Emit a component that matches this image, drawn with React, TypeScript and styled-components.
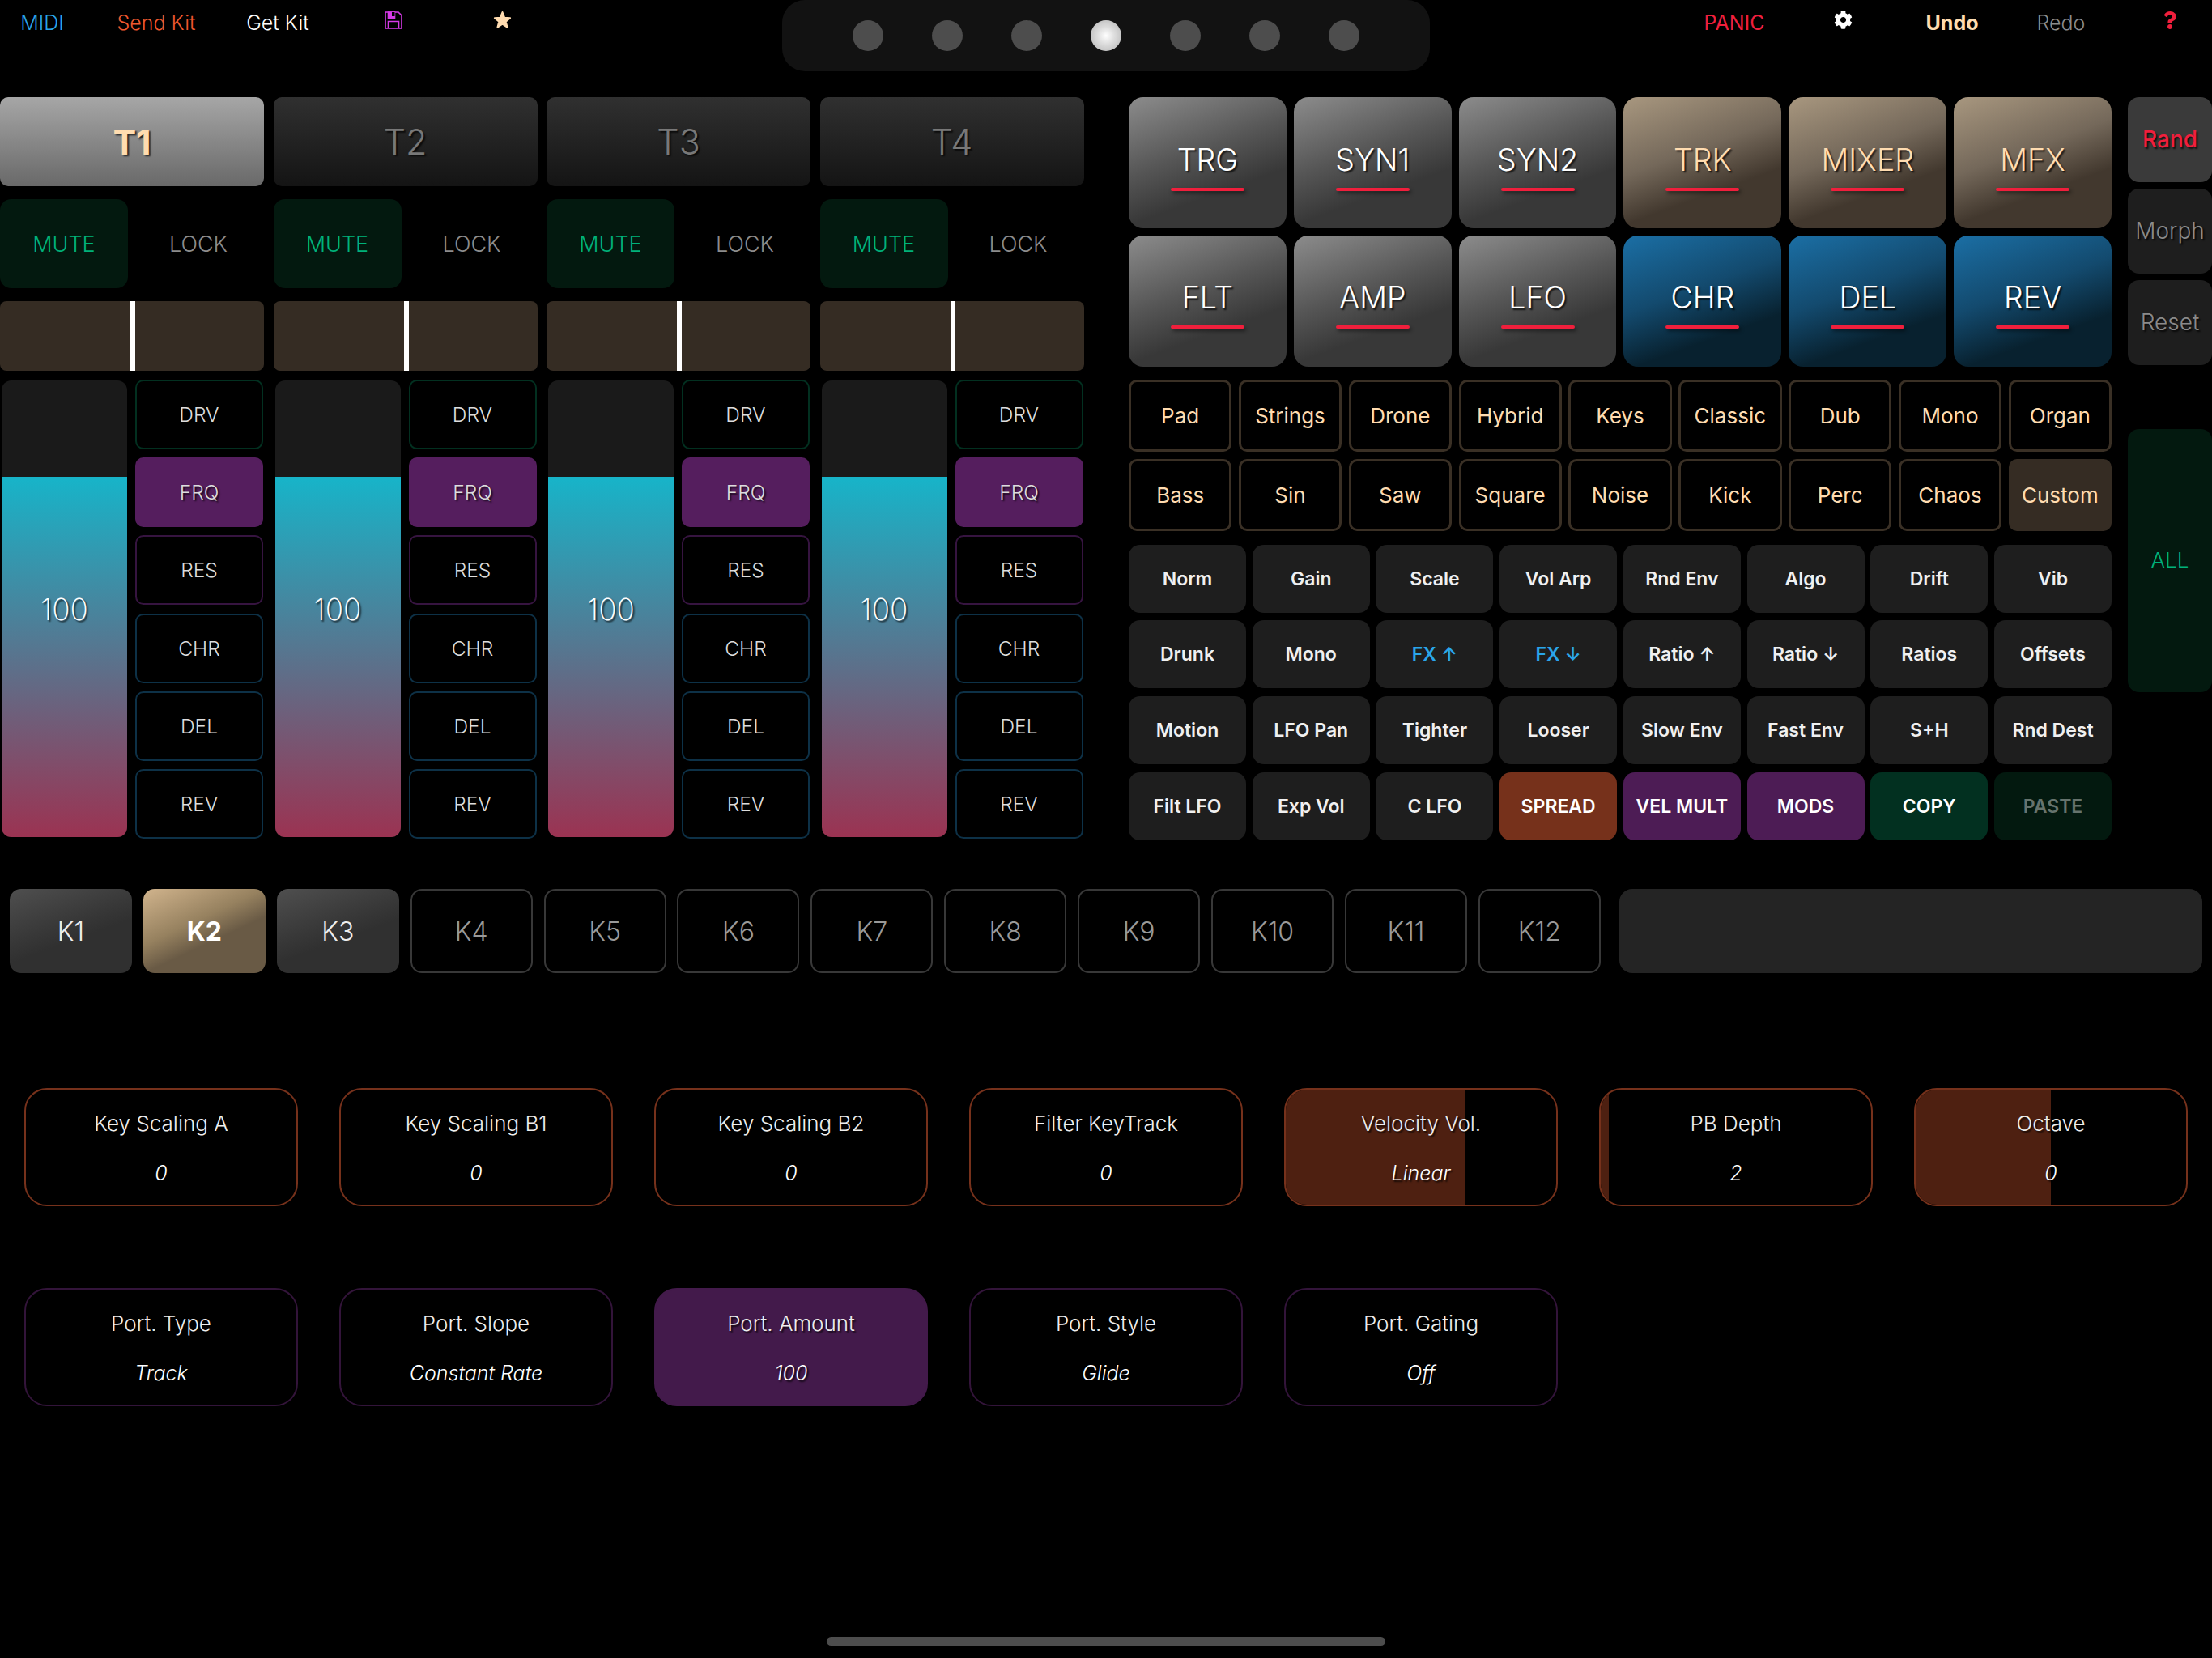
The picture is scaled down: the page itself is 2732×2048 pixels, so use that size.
import * as React from 'react';
import styled, { createGlobalStyle, css } from 'styled-components';
import { FaCog, FaQuestion } from 'react-icons/fa';

const Colors = {
  cream: '#ffdcb0',
  red: '#f01f3c',
  blue: '#2aa5ea',
  green: '#00b27a',
  orange: '#76311b',
  purple: '#4d1c55',
  tan: '#352c23',
  panel: '#1e1e1e',
};

const Global = createGlobalStyle`
  html, body { margin: 0; padding: 0; background: #000; }
  * { box-sizing: border-box; }
`;

const Page = styled.div`
  position: relative;
  width: 2732px;
  height: 2048px;
  overflow: hidden;
  background: #000;
  color: #fff;
  font-family: Inter, "Liberation Sans", sans-serif;
`;

/* header */

const Header = styled.header`
  display: flex;
  align-items: flex-start;
  height: 120px;
`;

const LeftNav = styled.nav`
  display: grid;
  flex: none;
  grid-template-columns: 104px 178px 122px 164px 104px;
  width: 966px;
`;

const RightNav = styled.nav`
  display: flex;
  flex: none;
  gap: 30.5px;
  margin-left: 324px;
`;

const NavItem = styled.div<{ $color: string; $weight?: number; $icon?: boolean }>`
  display: flex;
  align-items: center;
  justify-content: center;
  width: 104px;
  height: 56px;
  padding-bottom: ${p => (p.$icon ? '7px' : '0')};
  font-size: 25px;
  font-weight: ${p => p.$weight || 300};
  color: ${p => p.$color};
  white-space: nowrap;
`;

const LeftNavItem = styled(NavItem)`
  width: 100%;
`;

const DotPanel = styled.div`
  display: flex;
  flex: none;
  align-items: center;
  justify-content: center;
  gap: 60px;
  width: 800px;
  height: 88px;
  border-radius: 28px;
  background: #121212;
`;

const Dot = styled.span<{ $on?: boolean }>`
  width: 38px;
  height: 38px;
  border-radius: 50%;
  background: ${p => (p.$on ? 'radial-gradient(circle, #fff 0%, #dcdcdc 40%, #b0b0b0 100%)' : '#4d4d4d')};
`;

/* main */

const Main = styled.main`
  display: flex;
  align-items: flex-start;
  height: 916px;
`;

const Tracks = styled.section`
  display: grid;
  grid-template-columns: repeat(4, 326px);
  gap: 11.5px;
  width: 1338px;
`;

const Strip = styled.div`
  display: flex;
  flex-direction: column;
`;

const shadow = css`
  text-shadow: 2px 2px 2px rgba(0, 0, 0, 0.75);
`;

const TrackTab = styled.div<{ $on?: boolean }>`
  display: flex;
  align-items: center;
  justify-content: center;
  height: 110px;
  border-radius: 10px;
  font-size: 43px;
  font-weight: ${p => (p.$on ? 700 : 300)};
  ${shadow};
  color: ${p => (p.$on ? Colors.cream : '#787878')};
  background: ${p => (p.$on ? 'linear-gradient(180deg, #a6a6a6, #696969)' : 'linear-gradient(180deg, #303030, #141414)')};
`;

const MuteRow = styled.div`
  display: grid;
  grid-template-columns: 158px 158px;
  gap: 8px;
  height: 110px;
  margin-top: 16px;
`;

const MuteButton = styled.div<{ $on?: boolean }>`
  display: flex;
  align-items: center;
  justify-content: center;
  border-radius: 14px;
  font-size: 27px;
  font-weight: 300;
  color: ${p => (p.$on ? Colors.green : '#8c8c8c')};
  background: ${p => (p.$on ? '#03190f' : 'transparent')};
`;

const Slider = styled.div`
  position: relative;
  height: 86px;
  margin-top: 16px;
  border-radius: 8px;
  background: ${Colors.tan};
`;

const SliderThumb = styled.span`
  position: absolute;
  top: 0;
  bottom: 0;
  left: 161px;
  width: 6px;
  background: #fff;
`;

const StripBody = styled.div`
  display: grid;
  grid-template-columns: 155px 158px;
  gap: 10px;
  margin: 10.5px 0 0 2px;
`;

const Fader = styled.div`
  position: relative;
  display: flex;
  flex-direction: column;
  height: 564px;
  margin-top: 1.5px;
  border-radius: 12px;
  overflow: hidden;
  background: #1a1a1a;
`;

const FaderFill = styled.div`
  margin-top: auto;
  height: 445px;
  background: linear-gradient(180deg, #17b4c9, #9b3352);
`;

const FaderValue = styled.span`
  position: absolute;
  inset: 0;
  display: flex;
  align-items: center;
  justify-content: center;
  font-size: 37px;
  font-weight: 250;
  ${shadow};
`;

const SendStack = styled.div`
  display: flex;
  flex-direction: column;
  gap: 10.4px;
`;

const SendButton = styled.div<{ $border: string; $on?: boolean }>`
  display: flex;
  align-items: center;
  justify-content: center;
  height: 86px;
  border: 2px solid ${p => p.$border};
  border-radius: 10px;
  font-size: 24.5px;
  font-weight: 300;
  color: #ddd;
  ${shadow};
  background: ${p => (p.$on ? p.$border : 'transparent')};
`;

const Pages = styled.section`
  width: 1214px;
  margin-left: 56px;
`;

const PageGrid = styled.div`
  display: grid;
  grid-template-columns: repeat(6, 1fr);
  grid-auto-rows: 162px;
  gap: 8.5px 9px;
`;

const pageThemes = {
  grey: 'linear-gradient(160deg, #8c8c8c 0%, #565656 42%, #383838 68%, #383838 100%)',
  tan: 'linear-gradient(160deg, #a8977f 0%, #74685a 42%, #42382e 68%, #42382e 100%)',
  blue: 'linear-gradient(160deg, #1b6fa5 0%, #134a6e 42%, #08212f 72%, #08212f 100%)',
};

const PageButton = styled.div<{ $theme: keyof typeof pageThemes }>`
  display: flex;
  flex-direction: column;
  align-items: center;
  padding-top: 54.5px;
  border-radius: 18px;
  font-size: 37.5px;
  font-weight: 300;
  line-height: 46px;
  color: ${p => (p.$theme === 'tan' ? Colors.cream : '#fff')};
  ${shadow};
  background: ${p => pageThemes[p.$theme]};
`;

const PageUnderline = styled.span`
  width: 91px;
  height: 4px;
  margin-top: 11px;
  border-radius: 2px;
  background: ${Colors.red};
  box-shadow: 2px 3px 4px rgba(0, 0, 0, 0.5);
`;

const PresetGrid = styled.div`
  display: grid;
  grid-template-columns: repeat(9, 1fr);
  grid-auto-rows: 89px;
  gap: 9px 8.5px;
  margin-top: 16px;
`;

const Preset = styled.div<{ $on?: boolean }>`
  display: flex;
  align-items: center;
  justify-content: center;
  border: 3px solid ${p => (p.$on ? 'transparent' : '#3a3025')};
  border-radius: 10px;
  font-size: 26px;
  font-weight: 400;
  color: ${Colors.cream};
  background: ${p => (p.$on ? Colors.tan : 'transparent')};
`;

const ActionGrid = styled.div`
  display: grid;
  grid-template-columns: repeat(8, 1fr);
  grid-auto-rows: 84px;
  gap: 9.7px 7.7px;
  margin-top: 17px;
`;

const actionThemes = {
  plain: { bg: Colors.panel, fg: '#f0f0f0' },
  fx: { bg: Colors.panel, fg: Colors.blue },
  orange: { bg: Colors.orange, fg: '#fff' },
  purple: { bg: Colors.purple, fg: '#fff' },
  copy: { bg: '#023020', fg: '#fff' },
  paste: { bg: '#03190f', fg: '#66736d' },
};

const Action = styled.div<{ $theme?: keyof typeof actionThemes }>`
  display: flex;
  align-items: center;
  justify-content: center;
  border-radius: 14px;
  font-size: 23px;
  font-weight: 600;
  white-space: nowrap;
  color: ${p => actionThemes[p.$theme || 'plain'].fg};
  background: ${p => actionThemes[p.$theme || 'plain'].bg};
`;

const Side = styled.aside`
  display: flex;
  flex-direction: column;
  gap: 8px;
  width: 104px;
  margin-left: 20px;
`;

const SideButton = styled.div<{ $on?: boolean }>`
  display: flex;
  align-items: center;
  justify-content: center;
  height: 105px;
  border-radius: 14px;
  padding-bottom: 2px;
  font-size: 28px;
  font-weight: ${p => (p.$on ? 500 : 300)};
  ${shadow};
  color: ${p => (p.$on ? Colors.red : '#8a8a8a')};
  background: ${p => (p.$on ? '#3a3a3a' : Colors.panel)};
`;

const AllButton = styled.div`
  display: flex;
  align-items: center;
  justify-content: center;
  height: 325px;
  margin-top: 71px;
  padding-bottom: 2px;
  border-radius: 14px;
  font-size: 26px;
  font-weight: 300;
  color: ${Colors.green};
  background: #03190f;
`;

/* keys */

const KeyRow = styled.section`
  display: flex;
  gap: 13.9px;
  height: 104px;
  margin: 62px 0 0 12px;
`;

const keyThemes = {
  off: css`
    border: 2.5px solid #383838;
    color: #999;
    font-weight: 300;
  `,
  used: css`
    background: linear-gradient(160deg, #4f4f4f 0%, #383838 42%, #303030 58%, #303030 100%);
    color: #eee;
    font-weight: 300;
  `,
  on: css`
    background: linear-gradient(155deg, #d1b48d 0%, #96815f 40%, #695a45 60%, #695a45 100%);
    color: #fff;
    font-weight: 700;
  `,
};

const KeyButton = styled.div<{ $state: keyof typeof keyThemes }>`
  display: flex;
  align-items: center;
  justify-content: center;
  width: 151px;
  border-radius: 14px;
  font-size: 32px;
  ${p => keyThemes[p.$state]};
`;

const KeyPanel = styled.div`
  width: 720px;
  margin-left: 9px;
  border-radius: 16px;
  background: #242424;
`;

/* parameters */

const Params = styled.section`
  display: grid;
  grid-template-columns: repeat(7, 338px);
  grid-auto-rows: 146px;
  gap: 101px 51px;
  margin: 142px 0 0 30px;
`;

const Param = styled.div<{ $border: string; $on?: boolean }>`
  position: relative;
  display: flex;
  flex-direction: column;
  align-items: center;
  padding-top: 25px;
  border: 2px solid ${p => p.$border};
  border-radius: 28px;
  overflow: hidden;
  background: ${p => (p.$on ? '#431a4b' : 'transparent')};
`;

const ParamFill = styled.span`
  position: absolute;
  top: 0;
  bottom: 0;
  left: 0;
  background: #4e2011;
`;

const ParamLabel = styled.span`
  position: relative;
  font-size: 26px;
  font-weight: 300;
  line-height: 34px;
  color: #eee;
  ${shadow};
`;

const ParamValue = styled.span`
  position: relative;
  margin-top: 27px;
  font-size: 25px;
  font-weight: 300;
  font-style: italic;
  line-height: 34px;
  ${shadow};
`;

const HomeBar = styled.div`
  position: absolute;
  left: 1021px;
  top: 2022px;
  width: 690px;
  height: 11px;
  border-radius: 6px;
  background: #4d4d4d;
`;

const SaveIcon = () => (
  <svg width="22" height="22" viewBox="0 0 22 22" fill="none" stroke="#d63ae8" strokeWidth="1.6">
    <path d="M1 1h16l4 4v16H1z" />
    <path d="M4.5 1h8v8h-8z" fill="#d63ae8" />
    <path d="M9 1h3.5v5H9z" fill="#000" stroke="none" />
    <path d="M4.5 21v-8.5h13V21" />
  </svg>
);

const StarIcon = () => (
  <svg width="23" height="23" viewBox="0 0 23 23" fill="currentColor" stroke="currentColor" strokeWidth="2" strokeLinejoin="round">
    <path d="M11.5 2l2.6 6.7 7 .5-5.4 4.5 1.8 6.9-6-3.9-6 3.9 1.8-6.9-5.4-4.5 7-.5z" />
  </svg>
);

const SENDS: { name: string; border: string; on?: boolean }[] = [
  { name: 'DRV', border: '#023020' },
  { name: 'FRQ', border: '#551e5e', on: true },
  { name: 'RES', border: '#361440' },
  { name: 'CHR', border: '#0d3147' },
  { name: 'DEL', border: '#0d3147' },
  { name: 'REV', border: '#0d3147' },
];

const PAGES: [string, keyof typeof pageThemes][] = [
  ['TRG', 'grey'], ['SYN1', 'grey'], ['SYN2', 'grey'], ['TRK', 'tan'], ['MIXER', 'tan'], ['MFX', 'tan'],
  ['FLT', 'grey'], ['AMP', 'grey'], ['LFO', 'grey'], ['CHR', 'blue'], ['DEL', 'blue'], ['REV', 'blue'],
];

const PRESETS = [
  'Pad', 'Strings', 'Drone', 'Hybrid', 'Keys', 'Classic', 'Dub', 'Mono', 'Organ',
  'Bass', 'Sin', 'Saw', 'Square', 'Noise', 'Kick', 'Perc', 'Chaos', 'Custom',
];

const ACTIONS: [string, (keyof typeof actionThemes)?][] = [
  ['Norm'], ['Gain'], ['Scale'], ['Vol Arp'], ['Rnd Env'], ['Algo'], ['Drift'], ['Vib'],
  ['Drunk'], ['Mono'], ['FX ↑', 'fx'], ['FX ↓', 'fx'], ['Ratio ↑'], ['Ratio ↓'], ['Ratios'], ['Offsets'],
  ['Motion'], ['LFO Pan'], ['Tighter'], ['Looser'], ['Slow Env'], ['Fast Env'], ['S+H'], ['Rnd Dest'],
  ['Filt LFO'], ['Exp Vol'], ['C LFO'], ['SPREAD', 'orange'], ['VEL MULT', 'purple'], ['MODS', 'purple'], ['COPY', 'copy'], ['PASTE', 'paste'],
];

const PARAMS: { label: string; value: string; border: string; fill?: number; on?: boolean }[] = [
  { label: 'Key Scaling A', value: '0', border: Colors.orange },
  { label: 'Key Scaling B1', value: '0', border: Colors.orange },
  { label: 'Key Scaling B2', value: '0', border: Colors.orange },
  { label: 'Filter KeyTrack', value: '0', border: Colors.orange },
  { label: 'Velocity Vol.', value: 'Linear', border: Colors.orange, fill: 66.6 },
  { label: 'PB Depth', value: '2', border: Colors.orange, fill: 3 },
  { label: 'Octave', value: '0', border: Colors.orange, fill: 50 },
  { label: 'Port. Type', value: 'Track', border: '#33143a' },
  { label: 'Port. Slope', value: 'Constant Rate', border: '#33143a' },
  { label: 'Port. Amount', value: '100', border: '#431a4b', on: true },
  { label: 'Port. Style', value: 'Glide', border: '#33143a' },
  { label: 'Port. Gating', value: 'Off', border: '#33143a' },
];

export default function App() {
  return (
    <Page>
      <Global />
      <Header>
        <LeftNav>
          <LeftNavItem $color={Colors.blue}>MIDI</LeftNavItem>
          <LeftNavItem $color="#f0592f">Send Kit</LeftNavItem>
          <LeftNavItem $color="#fff">Get Kit</LeftNavItem>
          <LeftNavItem $color="#d63ae8" $icon><SaveIcon /></LeftNavItem>
          <LeftNavItem $color={Colors.cream} $icon><StarIcon /></LeftNavItem>
        </LeftNav>
        <DotPanel>
          {[0, 1, 2, 3, 4, 5, 6].map(i => <Dot key={i} $on={i === 3} />)}
        </DotPanel>
        <RightNav>
          <NavItem $color={Colors.red} $weight={400}>PANIC</NavItem>
          <NavItem $color="#fff" $icon><FaCog size={23} /></NavItem>
          <NavItem $color={Colors.cream} $weight={700}>Undo</NavItem>
          <NavItem $color="#8c8c8c">Redo</NavItem>
          <NavItem $color={Colors.red} $icon><FaQuestion size={22} /></NavItem>
        </RightNav>
      </Header>

      <Main>
        <Tracks>
          {['T1', 'T2', 'T3', 'T4'].map((t, i) => (
            <Strip key={t}>
              <TrackTab $on={i === 0}>{t}</TrackTab>
              <MuteRow>
                <MuteButton $on>MUTE</MuteButton>
                <MuteButton>LOCK</MuteButton>
              </MuteRow>
              <Slider><SliderThumb /></Slider>
              <StripBody>
                <Fader>
                  <FaderFill />
                  <FaderValue>100</FaderValue>
                </Fader>
                <SendStack>
                  {SENDS.map(s => <SendButton key={s.name} $border={s.border} $on={s.on}>{s.name}</SendButton>)}
                </SendStack>
              </StripBody>
            </Strip>
          ))}
        </Tracks>

        <Pages>
          <PageGrid>
            {PAGES.map(([name, theme]) => (
              <PageButton key={name} $theme={theme}>
                {name}
                <PageUnderline />
              </PageButton>
            ))}
          </PageGrid>
          <PresetGrid>
            {PRESETS.map(p => <Preset key={p} $on={p === 'Custom'}>{p}</Preset>)}
          </PresetGrid>
          <ActionGrid>
            {ACTIONS.map(([name, theme], i) => <Action key={i} $theme={theme}>{name}</Action>)}
          </ActionGrid>
        </Pages>

        <Side>
          <SideButton $on>Rand</SideButton>
          <SideButton>Morph</SideButton>
          <SideButton>Reset</SideButton>
          <AllButton>ALL</AllButton>
        </Side>
      </Main>

      <KeyRow>
        {Array.from({ length: 12 }, (_, i) => (
          <KeyButton key={i} $state={i === 1 ? 'on' : i < 3 ? 'used' : 'off'}>K{i + 1}</KeyButton>
        ))}
        <KeyPanel />
      </KeyRow>

      <Params>
        {PARAMS.map(p => (
          <Param key={p.label} $border={p.border} $on={p.on}>
            {p.fill ? <ParamFill style={{ width: `${p.fill}%` }} /> : null}
            <ParamLabel>{p.label}</ParamLabel>
            <ParamValue>{p.value}</ParamValue>
          </Param>
        ))}
      </Params>

      <HomeBar />
    </Page>
  );
}
